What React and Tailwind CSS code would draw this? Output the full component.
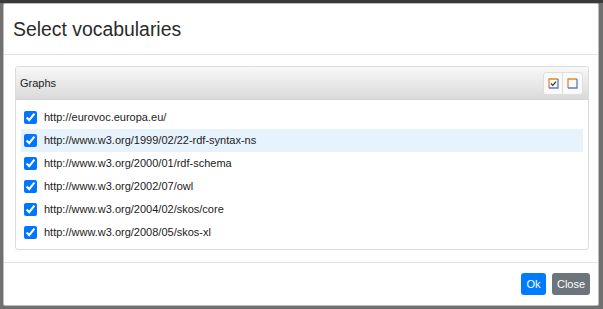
import { useState } from 'react';

const GRAPHS = [
    'http://eurovoc.europa.eu/',
    'http://www.w3.org/1999/02/22-rdf-syntax-ns',
    'http://www.w3.org/2000/01/rdf-schema',
    'http://www.w3.org/2002/07/owl',
    'http://www.w3.org/2004/02/skos/core',
    'http://www.w3.org/2008/05/skos-xl',
];

const BoxIcon = ({ checked }) => (
    <svg width="11" height="11" viewBox="0 0 11 11">
        <path d="M1 10V1h9" fill="none" stroke="#e0892e" strokeWidth="1.3" />
        <path d="M10 1v9H1" fill="none" stroke="#5a7fb8" strokeWidth="1.3" />
        {checked && <path d="M3 5.5l1.8 1.8L8 3.6" fill="none" stroke="#333" strokeWidth="1.2" />}
    </svg>
);

const App = () => {
    const [selected, setSelected] = useState(GRAPHS.map(() => true));

    const setAll = (value) => setSelected(GRAPHS.map(() => value));

    return (
        <div className="w-[603px] h-[309px] bg-[#707070] overflow-hidden font-['Liberation_Sans',Arial,sans-serif] text-[#222]">
            <div className="h-[3px] bg-[#3a3a3a]" />
            <div className="ml-[3px] w-[596px] h-[303px] bg-white border border-[#bdbdbd] rounded-[2px] flex flex-col">
                <div className="px-[9px] py-[10px] border-b border-[#e2e2e2]">
                    <h5 className="text-[19.4px] leading-[30px] text-[#2a2a2a]">Select vocabularies</h5>
                </div>

                <div className="flex-1 pl-[11px] pr-[9px] pt-[11px] pb-[12px]">
                    <div className="border border-[#dcdcdc] rounded-[3px] h-[184px] flex flex-col">
                        <div className="h-[33px] flex items-center justify-between pl-[4px] pr-[5px] border-b border-[#d4d4d4] rounded-t-[3px] bg-linear-to-b from-[#f8f8f8] to-[#dadada]">
                            <span className="text-[11px]">Graphs</span>
                            <div className="flex rounded-[3px] border border-[#dedede] bg-[#f9f9f9]">
                                <button onClick={() => setAll(true)} className="w-[19px] h-[21px] flex items-center justify-center border-r border-[#dedede]">
                                    <BoxIcon checked />
                                </button>
                                <button onClick={() => setAll(false)} className="w-[19px] h-[21px] flex items-center justify-center">
                                    <BoxIcon />
                                </button>
                            </div>
                        </div>
                        <ul className="pt-[6px] pb-[5px] px-[5px]">
                            {GRAPHS.map((g, i) => (
                                <li key={g} className={`h-[23px] flex items-center gap-[7px] pl-[3px] ${i === 1 ? 'bg-[#e6f2fc]' : ''}`}>
                                    <input
                                        type="checkbox"
                                        checked={selected[i]}
                                        onChange={() => setSelected(s => s.map((v, j) => (j === i ? !v : v)))}
                                        className="w-[13px] h-[13px] m-0 accent-[#0075ff]"
                                    />
                                    <span className="text-[11px] text-[#222]">{g}</span>
                                </li>
                            ))}
                        </ul>
                    </div>
                </div>

                <div className="h-[44px] border-t border-[#e2e2e2] flex items-center justify-end gap-[6px] pr-[8px]">
                    <button className="h-[22px] w-[25px] rounded-[3px] bg-[#007bff] text-white text-[11px]">Ok</button>
                    <button className="h-[22px] w-[38px] rounded-[3px] bg-[#6c757d] text-white text-[11px]">Close</button>
                </div>
            </div>
        </div>
    );
};

export default App;
